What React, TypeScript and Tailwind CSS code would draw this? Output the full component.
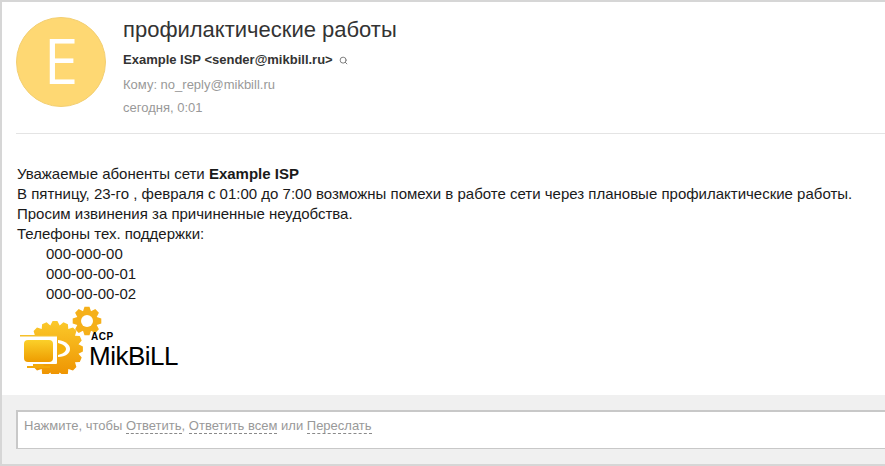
import { Search } from "lucide-react";

function gearPath(cx: number, cy: number, outer: number, inner: number, teeth: number): string {
  const pts: string[] = [];
  const step = (Math.PI * 2) / teeth;
  for (let i = 0; i < teeth; i++) {
    const a = i * step;
    const corners: [number, number][] = [
      [a - step * 0.5, inner],
      [a - step * 0.22, outer],
      [a + step * 0.22, outer],
    ];
    for (const [ang, r] of corners) {
      pts.push(`${(cx + Math.cos(ang) * r).toFixed(1)} ${(cy + Math.sin(ang) * r).toFixed(1)}`);
    }
  }
  return `M${pts.join("L")}Z`;
}

function Logo() {
  return (
    <div className="relative h-[70px] w-[165px]">
      <svg width="85" height="70" viewBox="0 0 85 70" className="block">
        <defs>
          <linearGradient id="gear" x1="0" y1="0" x2="0" y2="1">
            <stop offset="0" stopColor="#fbc92a" />
            <stop offset="1" stopColor="#ee9200" />
          </linearGradient>
          <linearGradient id="screen" x1="0" y1="0" x2="0" y2="1">
            <stop offset="0" stopColor="#fbd02a" />
            <stop offset="1" stopColor="#ee9c00" />
          </linearGradient>
        </defs>
        <path d={gearPath(38, 45, 28, 24, 16)} fill="url(#gear)" />
        <path d={gearPath(70, 17, 14.5, 10.5, 8)} fill="#f5b01a" />
        <circle cx="70" cy="17" r="6" fill="#fff" />
        <rect x="3" y="31" width="37" height="29" rx="1" fill="#fff" />
        <rect x="3" y="31" width="37" height="1.5" fill="#f6c02a" />
        <rect x="7" y="36" width="29" height="22" rx="4" fill="url(#screen)" />
        <path d="M41 36c8 1 12 5 12 9s-4 8-12 8z" fill="#fff" />
        <path d="M41 39c4 1 8 3 8 6s-4 5-8 6z" fill="#f4b10c" />
        <path d="M16 60h10l1 2h6v2H10v-2h6z" fill="#f3a90a" />
      </svg>
      <span className="absolute top-[28px] left-[74px] text-[10px] leading-none font-bold tracking-[0.5px] text-black">
        ACP
      </span>
      <span className="absolute top-[39px] left-[72px] text-[26px] leading-none tracking-[-0.5px] text-black">
        MikBiLL
      </span>
    </div>
  );
}

function DashedLink({ children }: { children: string }) {
  return <span className="border-b border-dashed border-[#8a8a8a]">{children}</span>;
}

export default function App() {
  return (
    <div className="flex h-[466px] w-[885px] flex-col overflow-hidden border-t-2 border-b-2 border-l-2 border-[#d6d6d6] bg-white font-['Liberation_Sans',Arial,sans-serif]">
      <header className="ml-[14px] flex h-[132px] shrink-0 gap-[17px] border-b border-[#e4e4e4] pt-[15px]">
        <div className="flex size-[90px] shrink-0 items-center justify-center rounded-full border border-[#f3cf72] bg-[#fed873] pb-[4px] font-['Open_Sans',sans-serif] text-[62px] leading-none font-medium text-white">
          E
        </div>
        <div className="min-w-0">
          <h1 className="mt-[1px] text-[22px] leading-[24px] font-normal text-[#333333]">
            профилактические работы
          </h1>
          <div className="mt-[8px] flex h-[20px] items-center gap-[6px] text-[13px] font-bold text-[#333333]">
            Example ISP &lt;sender@mikbill.ru&gt;
            <Search size={9} strokeWidth={2.5} className="text-[#777777]" />
          </div>
          <p className="mt-[5px] h-[20px] text-[13px] leading-[20px] text-[#999999]">
            Кому: no_reply@mikbill.ru
          </p>
          <p className="mt-[3px] text-[13px] leading-[20px] text-[#999999]">сегодня, 0:01</p>
        </div>
      </header>

      <main className="grow pt-[30px] pl-[15px] text-[15px] leading-[20px] text-[#1a1a1a]">
        <p>
          Уважаемые абоненты сети <b>Example ISP</b>
        </p>
        <p>
          В пятницу, 23-го , февраля с 01:00 до 7:00 возможны помехи в работе сети через плановые
          профилактические работы.
        </p>
        <p>Просим извинения за причиненные неудобства.</p>
        <p>Телефоны тех. поддержки:</p>
        <ul className="pl-[29px]">
          <li>000-000-00</li>
          <li>000-00-00-01</li>
          <li>000-00-00-02</li>
        </ul>
        <Logo />
      </main>

      <footer className="h-[69px] shrink-0 bg-[#f0f0f0] pt-[15px] pl-[14px]">
        <div className="h-[39px] border-y border-t-2 border-l-2 border-[#c8c8c8] bg-white pt-[5px] pl-[6px] text-[13px] leading-[18px] text-[#999999]">
          Нажмите, чтобы <DashedLink>Ответить</DashedLink>, <DashedLink>Ответить всем</DashedLink>{" "}
          или <DashedLink>Переслать</DashedLink>
        </div>
      </footer>
    </div>
  );
}
